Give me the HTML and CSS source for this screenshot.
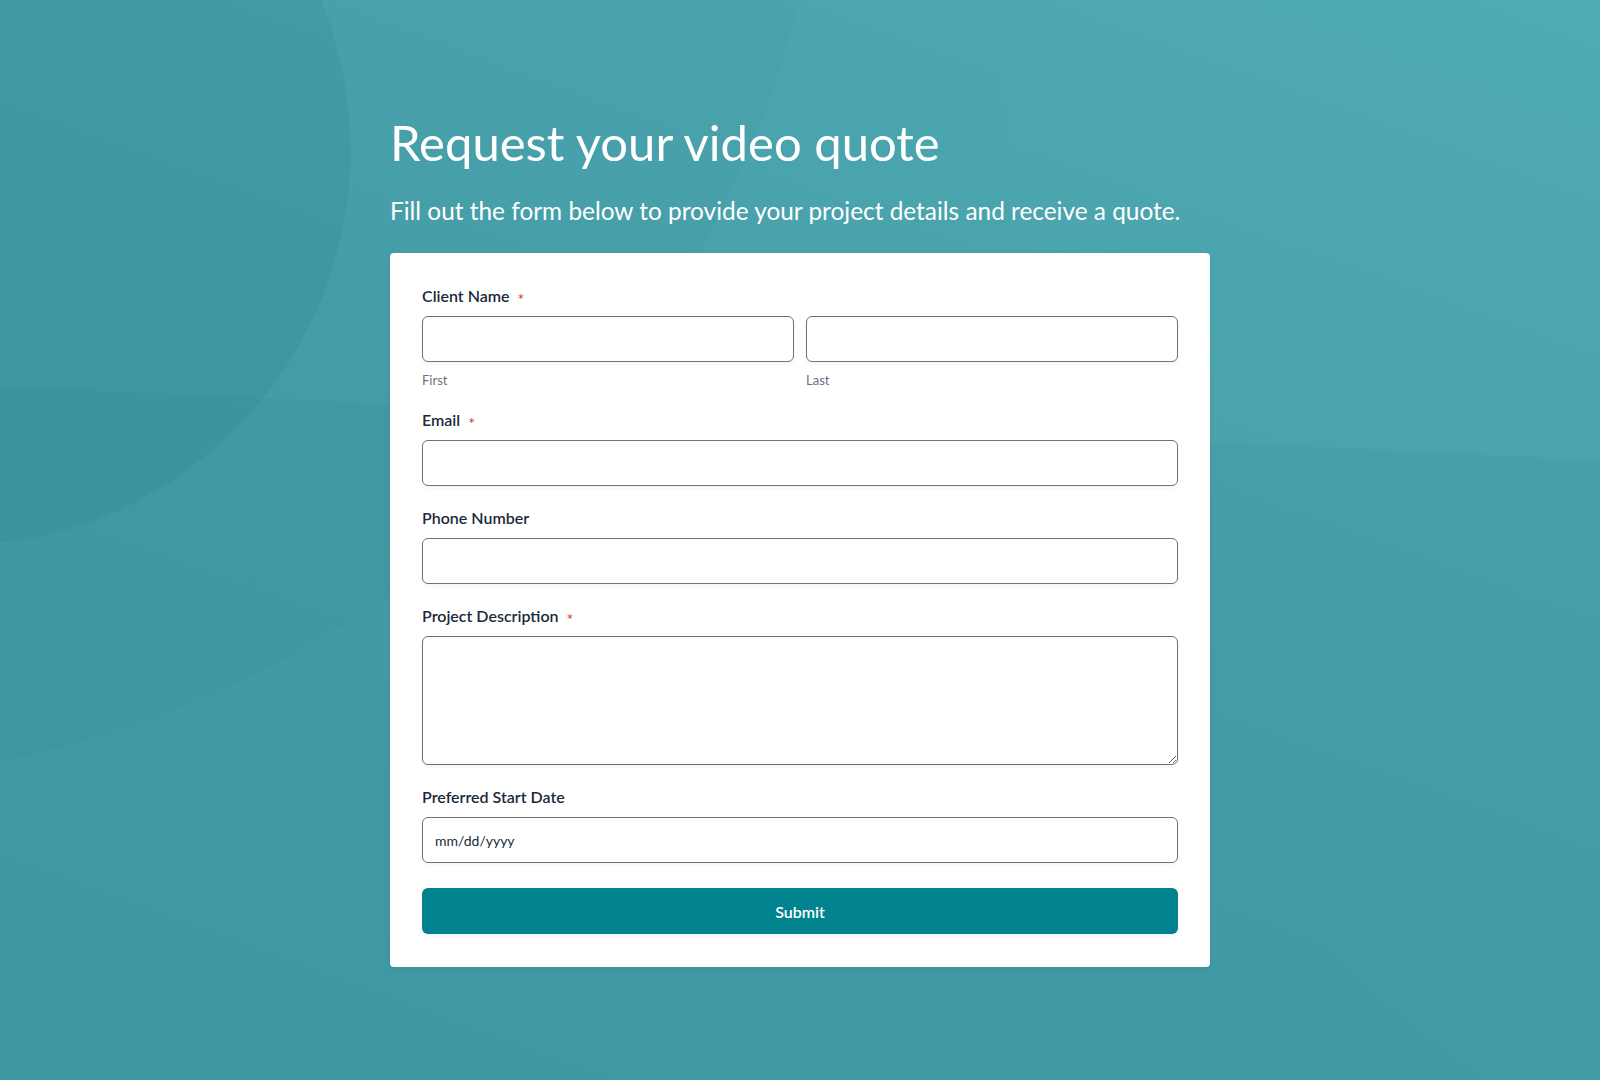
FILE: index.html
```html
<!DOCTYPE html>
<html lang="en">
<head>
    <meta charset="UTF-8">
    <meta name="viewport" content="width=device-width, initial-scale=1.0">
    <title>Request your video quote</title>
    <link rel="stylesheet" href="styles.css">
</head>
<body>
    <div class="page">
        <h1>Request your video quote</h1>
        <p class="intro">Fill out the form below to provide your project details and receive a quote.</p>

        <form class="quote-form" id="quoteForm">
            <div class="field">
                <label class="field-label">Client Name <span class="req">*</span></label>
                <div class="name-row">
                    <div class="name-part">
                        <input type="text" id="firstName" name="firstName">
                        <span class="sub-label">First</span>
                    </div>
                    <div class="name-part">
                        <input type="text" id="lastName" name="lastName">
                        <span class="sub-label">Last</span>
                    </div>
                </div>
            </div>

            <div class="field">
                <label class="field-label" for="email">Email <span class="req">*</span></label>
                <input type="email" id="email" name="email">
            </div>

            <div class="field">
                <label class="field-label" for="phone">Phone Number</label>
                <input type="tel" id="phone" name="phone">
            </div>

            <div class="field">
                <label class="field-label" for="description">Project Description <span class="req">*</span></label>
                <textarea id="description" name="description"></textarea>
            </div>

            <div class="field">
                <label class="field-label" for="startDate">Preferred Start Date</label>
                <input type="text" id="startDate" name="startDate" placeholder="mm/dd/yyyy">
            </div>

            <button type="submit" class="submit-button">Submit</button>
        </form>
    </div>
</body>
</html>
```

FILE: styles.css
```css
html, body {
    margin: 0;
    min-height: 100%;
}
body {
    font-family: Lato, "Open Sans", sans-serif;
    min-height: 1080px;
    background-color: #459ea8;
    background-image:
        radial-gradient(circle at -45px 150px, rgba(30, 110, 120, 0.12) 395px, transparent 396px),
        radial-gradient(circle at -200px -250px, rgba(30, 110, 120, 0.045) 1030px, transparent 1031px),
        linear-gradient(182.65deg, transparent 459px, rgba(30, 110, 120, 0.07) 460px),
        radial-gradient(circle at 2152px 143px, rgba(90, 180, 190, 0.06) 1148px, transparent 1149px),
        linear-gradient(200deg, #4eaab3 0%, #479fa9 45%, #409aa4 100%);
}
.page {
    width: 820px;
    margin: 0 auto;
    padding: 114px 0 80px;
}
h1 {
    margin: 0 0 27px;
    font-size: 49px;
    line-height: 56px;
    font-weight: 400;
    color: #fff;
}
.intro {
    margin: 0 0 28px;
    font-size: 24.4px;
    line-height: 28px;
    font-weight: 400;
    color: #fff;
}
.quote-form {
    background-color: #fff;
    border-radius: 4px;
    padding: 33px 32px 33px;
    box-shadow: 0 2px 6px rgba(0, 0, 0, 0.06);
}
.field {
    margin-bottom: 22px;
}
.field-label {
    display: block;
    margin-bottom: 10px;
    font-size: 16px;
    line-height: 20px;
    font-weight: 600;
    color: #1b2a3b;
}
.req {
    color: #d6331f;
    font-size: 16px;
    font-weight: 400;
    line-height: 0;
    margin-left: 4px;
    vertical-align: -3px;
}
input, textarea {
    display: block;
    width: 100%;
    box-sizing: border-box;
    height: 46px;
    padding: 0 12px;
    border: 1px solid #6c7283;
    border-radius: 6px;
    background: #fff;
    font-family: Lato, sans-serif;
    font-size: 14px;
    color: #1b2a3b;
    box-shadow: 0 2px 4px rgba(30, 40, 80, 0.05);
}
input::placeholder {
    color: #1b2a3b;
}
textarea {
    height: 129px;
    padding: 10px 12px;
}
.name-row {
    display: flex;
    gap: 12px;
}
.name-part {
    flex: 1;
}
.sub-label {
    display: block;
    margin-top: 10px;
    font-size: 13px;
    line-height: 16px;
    color: #6b7280;
}
.submit-button {
    display: block;
    width: 100%;
    height: 46px;
    margin-top: 25px;
    border: none;
    border-radius: 6px;
    background-color: #00838f;
    color: #fff;
    font-family: Lato, sans-serif;
    font-size: 16px;
    font-weight: 600;
    cursor: pointer;
    box-shadow: 0 2px 4px rgba(30, 40, 80, 0.05);
}
.submit-button:hover {
    background-color: #006f79;
}
```
